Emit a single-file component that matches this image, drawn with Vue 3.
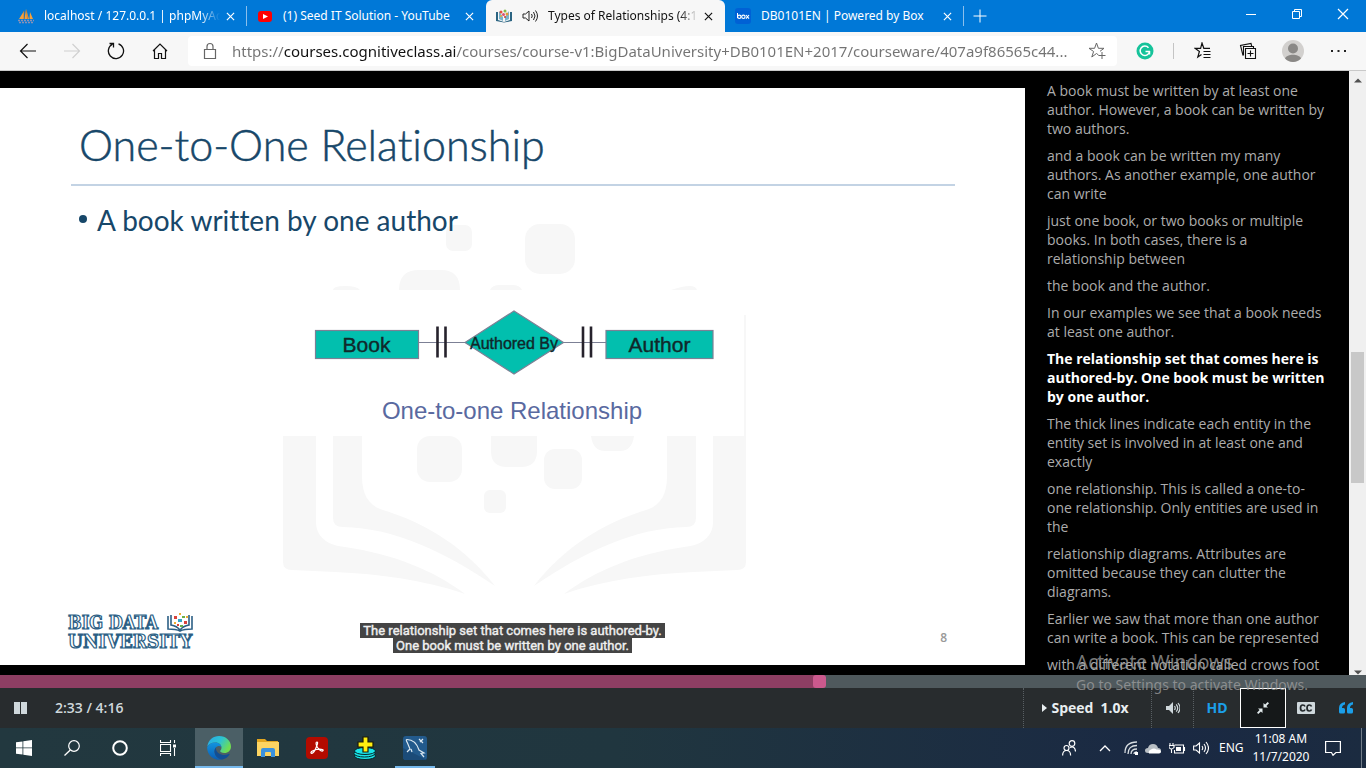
<script setup>
import { ref } from 'vue'

const tabs = [
  { title: 'localhost / 127.0.0.1 | phpMyAdmin', icon: 'pma', fade: true },
  { title: '(1) Seed IT Solution - YouTube', icon: 'yt' },
  { title: 'Types of Relationships (4:17)', icon: 'course', audio: true, active: true, fade: true },
  { title: 'DB0101EN | Powered by Box', icon: 'box' }
]

const url = ref('https://courses.cognitiveclass.ai/courses/course-v1:BigDataUniversity+DB0101EN+2017/courseware/407a9f86565c44...')
const duration = 256
const position = ref(153.9)

const transcript = [
  'A book must be written by at least one author. However, a book can be written by two authors.',
  'and a book can be written my many authors. As another example, one author can write',
  'just one book, or two books or multiple books. In both cases, there is a relationship between',
  'the book and the author.',
  'In our examples we see that a book needs at least one author.',
  'The relationship set that comes here is authored-by. One book must be written by one author.',
  'The thick lines indicate each entity in the entity set is involved in at least one and exactly',
  'one relationship. This is called a one-to-one relationship. Only entities are used in the',
  'relationship diagrams. Attributes are omitted because they can clutter the diagrams.',
  'Earlier we saw that more than one author can write a book. This can be represented',
  'with a different notation called crows foot'
]
const current = ref(5)
</script>

<template>
  <div class="screen">
    <header class="tabbar">
      <div v-for="t in tabs" :key="t.title" class="tab" :class="{ active: t.active }">
        <svg v-if="t.icon === 'pma'" class="fav" viewBox="0 0 16 16">
          <path d="M1 11 L6 3 L6 11Z M6.500 11 L8 1 L11 11Z M11.500 11 L12 4 L15 11Z" fill="#f6a13a" />
          <path d="M0 12.500h16M1 14.500h14" stroke="#8b91b5" stroke-width="1.500" stroke-dasharray="2 1" />
          <path d="M6 3v8M8.500 2l1 9" stroke="#996c3c" stroke-width=".6" />
        </svg>
        <svg v-else-if="t.icon === 'yt'" class="fav" viewBox="0 0 16 16">
          <rect x="1" y="3" width="14" height="11" rx="3" fill="#f00" />
          <path d="M6 6l5 2.500-5 2.500z" fill="#fff" />
        </svg>
        <svg v-else-if="t.icon === 'course'" class="fav" viewBox="0 0 16 16">
          <path d="M0 4h2v8l6 2 6-2V4h2v9l-8 1.500L0 13z" fill="#2b6482" />
          <path d="M3 3v8l4 2V9zM13 3v8l-4 2V9z" fill="#78b4cc" />
          <g>
            <circle cx="5" cy="4" r="1.500" fill="#e4513d" /><circle cx="9" cy="3" r="1.500" fill="#86b94d" />
            <circle cx="11" cy="6" r="1.500" fill="#e59a36" /><circle cx="7.500" cy="6.500" r="1.500" fill="#d94e74" />
            <circle cx="5" cy="8" r="1" fill="#e8a735" /><circle cx="9" cy="9" r="1" fill="#ce3f36" />
          </g>
        </svg>
        <svg v-else class="fav" viewBox="0 0 16 16">
          <rect width="16" height="16" rx="3" fill="#0061d5" />
          <path d="M2.500 5v5" stroke="#fff" />
          <g fill="none" stroke="#fff" stroke-width="1.100"><circle cx="4.300" cy="8.800" r="1.700" /><circle cx="8.400" cy="8.800" r="1.700" /><path d="M11 7l3 3.700M14 7l-3 3.700" /></g>
        </svg>
        <svg v-if="t.audio" class="audio" viewBox="0 0 16 14">
          <path d="M1 5v4h2.500L7 12V2L3.500 5zM9.500 5q1.500 2 0 4M11.500 3q3 4 0 8M13.500 1.500q4 5.500 0 11" fill="none" stroke="#222" />
        </svg>
        <span class="tab-title" :class="{ fade: t.fade }">{{ t.title }}</span>
        <button class="close" aria-label="Close tab">
          <svg viewBox="0 0 10 10"><path d="M1 1l8 8M9 1l-8 8" fill="none" stroke="currentColor" stroke-width="1.300" /></svg>
        </button>
      </div>
      <button class="newtab" aria-label="New tab">
        <svg viewBox="0 0 14 14"><path d="M7 .5v13M.5 7h13" stroke="#fff" fill="none" /></svg>
      </button>
      <div class="window-buttons">
        <button aria-label="Minimize"><svg viewBox="0 0 12 12"><path d="M1 6.500h10" stroke="#fff" /></svg></button>
        <button aria-label="Restore"><svg viewBox="0 0 12 12"><path d="M1.500 3.500h7v7h-7zM3.500 3.500v-2h7v7h-2" fill="none" stroke="#fff" /></svg></button>
        <button aria-label="Close"><svg viewBox="0 0 12 12"><path d="M1 1l10 10M11 1L1 11" stroke="#fff" stroke-width="1.200" /></svg></button>
      </div>
    </header>

    <nav class="toolbar">
      <div class="nav-buttons">
        <button aria-label="Back"><svg viewBox="0 0 18 18"><path d="M17 9H1.500M8.500 2l-7 7 7 7" fill="none" stroke="#111" stroke-width="1.200" /></svg></button>
        <button aria-label="Forward"><svg viewBox="0 0 18 18"><path d="M1 9h15.500M9.500 2l7 7-7 7" fill="none" stroke="#d0d0d0" stroke-width="1.200" /></svg></button>
        <button aria-label="Refresh"><svg viewBox="0 0 18 18"><path d="M11.500 1.800A7.600 7.600 0 1 1 5.500 2.200M2.500 1.500h4v4" fill="none" stroke="#111" stroke-width="1.300" /></svg></button>
        <button aria-label="Home"><svg viewBox="0 0 18 18"><path d="M2 9l7-7 7 7M3.500 7.500v9h4v-5h3v5h4v-9" fill="none" stroke="#111" stroke-width="1.200" /></svg></button>
      </div>
      <div class="address">
        <svg class="lock" viewBox="0 0 14 18"><path d="M1.500 7.500h11v9h-11zM4 7.500v-3a3 3 0 0 1 6 0v3" fill="none" stroke="#666" stroke-width="1.200" /></svg>
        <input v-model="url" class="url" type="text" aria-label="Address">
        <button aria-label="Add to favorites"><svg viewBox="0 0 18 18"><path d="M10.500 13L8.500 11.500 3.800 15l1.800-5.500L1 6.300h5.600L8.500 1l1.900 5.300H16l-4 3M14 10v7M10.500 13.500h7" fill="none" stroke="#666" /></svg></button>
      </div>
      <button class="grammarly" aria-label="Grammarly">
        <svg viewBox="0 0 18 18"><circle cx="9" cy="9" r="8.500" fill="#15c39a" /><path d="M12.500 5.800A4.700 4.700 0 1 0 13.500 9.500M9.500 9.500h4.500M13.500 9v3.500" fill="none" stroke="#fff" stroke-width="1.500" /></svg>
      </button>
      <span class="divider"></span>
      <div class="right-buttons">
        <button aria-label="Favorites"><svg viewBox="0 0 18 18"><path d="M7.500 12.500L3.800 15l1.600-5.500L1 6.300h5.600L8 1l1.800 5.300H16M9.500 9.500h7M9.500 12.500h7M9.500 15.500h7" fill="none" stroke="#111" stroke-width="1.200" /></svg></button>
        <button aria-label="Collections"><svg viewBox="0 0 18 18"><path d="M6.500 6.500h10v10h-10zM11.500 8.500v6M8.500 11.500h6M4 13.500L1.500 3.500 12 1.500l.8 3M4.500 13.500v-9h10v2" fill="none" stroke="#111" stroke-width="1.100" /></svg></button>
        <button class="avatar" aria-label="Profile"><svg viewBox="0 0 22 22"><circle cx="11" cy="11" r="11" fill="#d2d0ce" /><circle cx="11" cy="8.500" r="5" fill="#8a8886" /><path d="M3 18.500c2-5 14-5 16 0a11 11 0 0 1-16 0z" fill="#8a8886" /></svg></button>
        <button aria-label="Settings and more"><svg viewBox="0 0 18 18"><path d="M2 8h2v2H2zM8.500 8h2v2h-2zM15 8h2v2h-2z" fill="#222" /></svg></button>
      </div>
    </nav>

    <main class="player">
      <section class="video">
        <article class="slide">
          <svg class="art" viewBox="0 88 1025 577" preserveAspectRatio="none">
            <defs>
              <g id="page-half">
                <path d="M283 436h33v86c0 14 10 23 29 25c48 7 88 23 120 47c-40-14-85-20-130-22l-43-2q-9 0-9-8z" />
                <path d="M333 436h29v40c0 18 6 28 18 33c50 15 87 41 115 77c-50-34-100-58-152-59q-10 0-10-9z" />
              </g>
            </defs>
            <g fill="#f7f7f7">
              <use href="#page-half" />
              <use href="#page-half" transform="translate(1029 0) scale(-1 1)" />
              <rect x="744" y="315" width="2" height="122" />
              <rect x="446" y="225" width="26" height="26" rx="7" />
              <rect x="525" y="224" width="50" height="50" rx="15" />
              <path d="M399 290q0-20 20-20h22q19 0 19 20zM333 290q0-4 12-4t15 4zM490 290q2-5 10-5h12q8 0 10 5zM671 290q24-8 26 0z" />
              <rect x="417" y="436" width="45" height="46" rx="13" />
              <path d="M491 436h46v15q0 16-16 16h-14q-16 0-16-16zM591 436h43q-2 15-14 15h-15q-12 0-14-15z" />
              <rect x="544" y="449" width="38" height="40" rx="11" />
              <rect x="484" y="490" width="22" height="23" rx="6" />
            </g>
            <g stroke="#7c8095" stroke-width="1.200">
              <path d="M418 342.500h47M563 342.500h43" />
              <g fill="#02bfae">
                <rect x="315.500" y="330.500" width="103" height="28" />
                <rect x="606" y="330.500" width="107" height="28" />
                <path d="M465 342.500L514 311l49.500 31.500L514 374z" />
              </g>
            </g>
            <path d="M437.500 326.500v31M445.500 326.500v31M583 326.500v31M591 326.500v31" stroke="#26222c" stroke-width="2.600" />
            <g class="label" text-anchor="middle">
              <text x="366.500" y="352" font-size="21">Book</text>
              <text x="514" y="349" font-size="16">Authored By</text>
              <text x="659.500" y="352" font-size="21">Author</text>
              <text class="figure-title" x="512" y="419" font-size="24">One-to-one Relationship</text>
            </g>
            <g class="logo">
              <text x="68" y="629" font-size="18">BIG DATA</text>
              <text x="68" y="648" font-size="19">UNIVERSITY</text>
            </g>
            <g fill="none" stroke="#2c5f85" stroke-width="1.600">
              <path d="M168 616v13q8 0 12 2q4-2 12-2v-13M171 615v10q6 1 9 5q3-4 9-5v-10" />
            </g>
            <g>
              <path d="M174 616h3v3h-3zM184 621h3v3h-3zM177 624h2v2h-2z" fill="#d8443c" />
              <path d="M179 613h2v2h-2zM186 616h2v2h-2zM174 622h2v2h-2z" fill="#efae32" />
              <path d="M182 616h3v2h-3zM180 625h3v2h-3z" fill="#6ab04a" />
              <path d="M178 619h4v3h-4z" fill="#36a6c6" />
            </g>
          </svg>
          <h1>One-to-One Relationship</h1>
          <ul><li>A book written by one author</li></ul>
          <span class="page-number">8</span>
          <p class="caption"><span>The relationship set that comes here is authored-by.<br>One book must be written by one author.</span></p>
        </article>
      </section>
      <aside class="transcript">
        <ol>
          <li v-for="(line, i) in transcript" :key="i" :class="{ current: i === current }" @click="current = i">{{ line }}</li>
        </ol>
      </aside>
      <div class="scrollbar">
        <svg viewBox="0 0 8 5"><path d="M0 4.500L4 .5l4 4z" fill="#505050" /></svg>
        <span class="thumb"></span>
        <svg viewBox="0 0 8 5"><path d="M0 .5l4 4 4-4z" fill="#505050" /></svg>
      </div>
    </main>

    <input
      v-model="position" class="progress" type="range" min="0" :max="duration" step="0.1"
      aria-label="Video position" :style="{ '--played': position / duration * 100 + '%' }"
    >

    <div class="controls">
      <button class="pause" aria-label="Pause"><svg viewBox="0 0 14 12"><path d="M0 0h6v12H0zM7 0h6v12H7z" fill="#cfd8dc" /></svg></button>
      <span class="time">2:33 / 4:16</span>
      <button class="speed">
        <svg viewBox="0 0 5 8"><path d="M0 0l5 4-5 4z" fill="#e8eef0" /></svg>
        <span>Speed</span><span class="rate">1.0x</span>
      </button>
      <button class="volume" aria-label="Volume">
        <svg viewBox="0 0 14 12"><path d="M0 4v4h3l4 4V0L3 4z" fill="#cfd8dc" /><path d="M8.500 4q1.500 2 0 4M10.200 2.300q3 3.700 0 7.400M12 1q4 5 0 10" fill="none" stroke="#cfd8dc" stroke-width="1.200" /></svg>
      </button>
      <button class="hd">HD</button>
      <button class="shrink" aria-label="Exit full browser">
        <svg viewBox="0 0 12 12"><path d="M6.500 5.500V1l1.600 1.600L10.700 0 12 1.300 9.400 3.900 11 5.500zM5.500 6.500V11L3.900 9.400 1.300 12 0 10.700l2.600-2.600L1 6.500z" fill="#e2eaec" /></svg>
      </button>
      <button class="cc" aria-label="Captions">
        <svg viewBox="0 0 18 12"><rect width="18" height="12" rx="1" fill="#cfd8dc" /><path d="M8 4.500Q7.500 3 5.800 3Q3.500 3 3.500 6T5.800 9Q7.500 9 8 7.500M14.500 4.500Q14 3 12.300 3Q10 3 10 6t2.300 3Q14 9 14.500 7.500" fill="none" stroke="#22282b" stroke-width="1.700" /></svg>
      </button>
      <button class="quote" aria-label="Transcript">
        <svg viewBox="0 0 14 12"><path d="M6 0Q0 1 0 6v4q0 1.500 1.500 1.500h3Q6 11.500 6 10V7.500Q6 6 4.500 6H3Q3 3 6 2.500zM14 0Q8 1 8 6v4q0 1.500 1.500 1.500h3q1.500 0 1.500-1.500V7.500Q14 6 12.500 6H11q0-3 3-3.500z" fill="#1b9fe9" /></svg>
      </button>
    </div>

    <footer class="taskbar">
      <div class="apps">
        <button aria-label="Start"><svg class="i16" viewBox="0 0 16 16"><path d="M0 2.300l6.500-.9v6.100H0zM7.300 1.300L16 0v7.500H7.300zM0 8.300h6.500v6.300L0 13.700zM7.300 8.300H16V16l-8.700-1.200z" fill="#fff" /></svg></button>
        <button aria-label="Search"><svg class="i16" viewBox="0 0 16 16"><circle cx="10" cy="6" r="5.300" fill="none" stroke="#fff" stroke-width="1.200" /><path d="M6.300 10L.5 15.500" stroke="#fff" stroke-width="1.300" /></svg></button>
        <button aria-label="Cortana"><svg class="i16" viewBox="0 0 16 16"><circle cx="8" cy="8" r="6.800" fill="none" stroke="#fff" stroke-width="2" /></svg></button>
        <button aria-label="Task view"><svg class="i16" viewBox="0 0 16 16"><path d="M.5 0v2.500h10V0M.5 16v-2.500h10V16M.5 4.500h10v7H.500zM14.500 0v3M14.500 8v8" fill="none" stroke="#fff" stroke-width="1.100" /><path d="M13 4.500h3v3h-3z" fill="#fff" /></svg></button>
        <button class="focused" aria-label="Microsoft Edge">
          <svg class="i24" viewBox="0 0 24 24">
            <defs>
              <linearGradient id="edge-top" x1="0" y1="0" x2="1" y2=".5"><stop offset="0" stop-color="#28a8e8" /><stop offset=".55" stop-color="#2cc3d3" /><stop offset="1" stop-color="#6fdd52" /></linearGradient>
              <linearGradient id="edge-low" x1="0" y1="0" x2="0" y2="1"><stop offset="0" stop-color="#1294df" /><stop offset="1" stop-color="#0b5cb3" /></linearGradient>
            </defs>
            <path d="M.3 10.500C1.300 4 6.200 0 12 0c7 0 12 5 12 10.500 0 4-3 6.500-6.500 6.500-3 0-4.300-1.200-4.300-2 0-.7 1.300-1.200 1.300-3.300C14.500 9 12 6.500 8.500 6.500 4.500 6.500 1.500 8.500.3 10.500z" fill="url(#edge-top)" />
            <path d="M.2 11C1.500 8.300 4.600 6.500 8 6.500c3.500 0 6 2 6.500 4.500-1-1-2.200-1.300-3.200-1-2.500.8-3.800 3-3.800 5.500 0 4 3.200 7.500 7.500 8A12 12 0 0 1 .2 11z" fill="url(#edge-low)" />
            <path d="M9.300 11C7.500 13 7 15 7.800 17.500c1 3.500 4.200 6 7.700 6 3-.8 5.500-2.500 7-5 .2-.6-.3-.8-.8-.5-5.500 2.500-11.500 0-12.700-4.500-.2-1 0-2 .3-2.500z" fill="#124e94" />
          </svg>
        </button>
        <button aria-label="File Explorer"><svg class="i22" viewBox="0 0 22 20"><path d="M0 1h8l2 2h11v15H0z" fill="#e2a620" /><path d="M0 4h22v14H0z" fill="#fcd462" /><path d="M4 19v-7q0-2 2-2h10q2 0 2 2v7h-4v-4q0-1-1-1H9q-1 0-1 1v4z" fill="#3b92dd" /></svg></button>
        <button aria-label="Acrobat Reader"><svg class="i22" viewBox="0 0 22 22"><rect width="22" height="22" rx="4" fill="#b30b00" /><path d="M11 5c-1.500 0-1 3 .5 5.500s4.500 4.500 5.500 3.200-3.500-2-6.500-1.200-6.200 2.300-5.500 3.500 3-.5 4.500-4S12.500 5 11 5z" fill="none" stroke="#fff" stroke-width="1.200" /></svg></button>
        <button aria-label="Disk utility"><svg class="i24" viewBox="0 0 24 24"><g fill="#19e4e8" stroke="#05262b"><ellipse cx="12" cy="20" rx="10.500" ry="3.500" /><ellipse cx="11.500" cy="17.500" rx="10.500" ry="3.500" /><ellipse cx="12" cy="15" rx="10.500" ry="3.500" /></g><path d="M10 1h5v5h5v5h-5v5h-5v-5H5V6h5z" fill="#ffee11" stroke="#1c1c08" stroke-width="1.200" /></svg></button>
        <button class="running" aria-label="MySQL Workbench"><svg class="i24" viewBox="0 0 24 24"><rect width="24" height="24" rx="3" fill="#225a8c" /><path d="M0 12l24 12H3q-3 0-3-3z" fill="#1b4b78" /><path d="M4 16L7 13 4.500 7Q2.500 3.500 4 3.500C11 3.500 14 8 16 14l5 3-3 .5 3 3.500M8 13l1 3M16 3l4 4M17 6l3-3" fill="none" stroke="#dce8f0" stroke-width="1.200" /></svg></button>
      </div>
      <div class="tray">
        <svg class="people" viewBox="0 0 14 16"><g fill="none" stroke="#fff" stroke-width="1.200"><circle cx="10" cy="3.500" r="2.800" /><circle cx="4.500" cy="8" r="2.500" /><path d="M.6 15.500q0-5 4-5t4 5M8 7.500q5-2 5.500 4" /></g></svg>
        <svg class="caret" viewBox="0 0 12 8"><path d="M1 7l5-5 5 5" fill="none" stroke="#fff" stroke-width="1.300" /></svg>
        <svg class="wifi" viewBox="0 0 14 14"><path d="M1 12Q1 1 13 1M4 13Q4 4.500 13 4.500M7 13q0-5 6-5M10 13q0-2 3-2" fill="none" stroke="#d7dde1" stroke-width="1.300" /><path d="M11 11h3v3h-3z" fill="#fff" /></svg>
        <svg class="cloud" viewBox="0 0 16 11"><path d="M3 10Q0 10 0 7.500T3 5q1-4 5-4t5 4q3 0 3 2.500T13 10z" fill="#b9bfc4" /><path d="M4 10.500q-1-3 2-4 3-2 5.500 0 4-.5 4.500 2 0 2-2 2z" fill="#fff" /></svg>
        <svg class="battery" viewBox="0 0 17 12"><path d="M5.500 3h9v8h-9V8M15.500 5v4M0 3.500h5v2q-2.500 3-5 0zM1 1v2M4 1v2M2.500 7v4" fill="none" stroke="#fff" stroke-width="1.100" /><path d="M7 5h5v4H7z" fill="#fff" /></svg>
        <svg class="sound" viewBox="0 0 16 14"><path d="M.6 5v4h2.500L6.500 12V2L3.100 5zM9 5q1.500 2 0 4M11 3q3 4 0 8M13 1q5 6 0 12" fill="none" stroke="#fff" stroke-width="1.100" /></svg>
        <span class="lang">ENG</span>
        <time class="clock">11:08 AM<br>11/7/2020</time>
        <svg class="note" viewBox="0 0 16 16"><path d="M.6 1.500h14.800v11h-4.500L8 15.300 6.500 12.500H.6z" fill="none" stroke="#fff" stroke-width="1.200" /></svg>
        <span class="show-desktop"></span>
      </div>
    </footer>

    <div class="activation">
      <strong>Activate Windows</strong>
      <span>Go to Settings to activate Windows.</span>
    </div>
  </div>
</template>

<style>
html, body { margin: 0; overflow: hidden; }
</style>

<style scoped>
.screen {
  position: relative;
  display: flex;
  flex-direction: column;
  height: 100vh;
  overflow: hidden;
  font-family: "Open Sans", "Noto Sans", sans-serif;
  background: #000;
}
button {
  display: flex;
  align-items: center;
  justify-content: center;
  padding: 0;
  border: 0;
  background: none;
  color: inherit;
  font: inherit;
}
svg { display: block; flex: none; }

.tabbar { display: flex; flex: none; height: 32px; padding-left: 8px; background: #0078d7; color: #fff; }
.tab {
  display: flex;
  align-items: center;
  flex: 0 1 239px;
  min-width: 0;
  box-sizing: border-box;
  padding: 0 10px;
  font: 12px/16px "Noto Sans", sans-serif;
  border-right: 1px solid transparent;
}
.tab:first-child, .tab:nth-child(4) {
  border-image: linear-gradient(transparent 20%, #8bbfec 20%, #8bbfec 80%, transparent 80%) 1;
}
.tab.active { background: #f7f7f7; color: #111; border-radius: 6px 6px 0 0; }
.fav { width: 16px; height: 16px; margin-right: 10px; }
.audio { width: 16px; height: 14px; margin-right: 10px; }
.tab-title { flex: 1; overflow: hidden; white-space: nowrap; }
.tab-title.fade { mask-image: linear-gradient(to right, #000 88%, transparent); }
.close { width: 12px; height: 20px; margin-left: 4px; }
.close svg { width: 9px; height: 9px; }
.newtab { width: 32px; }
.newtab svg { width: 14px; height: 14px; }
.window-buttons { display: flex; margin-left: auto; padding-bottom: 4px; }
.window-buttons button { width: 46px; }
.window-buttons svg { width: 12px; height: 12px; }

.toolbar { display: flex; flex: none; align-items: center; height: 38px; background: #f7f7f7; border-bottom: 1px solid #c9c9c9; }
.nav-buttons { display: flex; padding: 0 6px; }
.nav-buttons button { width: 44px; height: 30px; }
.right-buttons button { width: 45px; height: 30px; }
.toolbar svg { width: 18px; height: 18px; }
.address { display: flex; flex: 1; align-items: center; height: 30px; padding: 0 11px 0 15px; background: #fff; border-radius: 4px; }
.toolbar .lock { width: 14px; height: 18px; margin-right: 15px; }
.url {
  flex: 1;
  min-width: 0;
  padding: 0;
  border: 0;
  outline: 0;
  font: 15px/22px "Noto Sans", sans-serif;
  color: transparent;
  background: linear-gradient(to right, #737373 52px, #111 52px, #111 225px, #737373 225px);
  background-clip: text;
}
.grammarly { width: 56px; height: 30px; }
.divider { width: 1px; height: 16px; background: #c4c4c4; }
.right-buttons { display: flex; padding: 0 6px; }
.toolbar .avatar svg { width: 22px; height: 22px; }

.player { display: flex; flex: 1; min-height: 0; background: #000; }
.video { display: flex; flex: 1; min-width: 0; padding: 17px 0 10px; }
.slide { position: relative; flex: 1; overflow: hidden; background: #fff; color: #174769; font-family: Lato, sans-serif; font-variant-ligatures: none; }
.art { position: absolute; inset: 0; width: 100%; height: 100%; }
.label { font-family: "Liberation Sans", Arial, sans-serif; fill: #10282a; stroke: #10282a; stroke-width: .4px; }
.figure-title { fill: #5969a0; stroke: none; }
.logo { font-family: "DejaVu Serif Condensed", "Liberation Serif", serif; font-weight: 700; fill: #fff; stroke: #2c5f85; stroke-width: 1.200px; }
h1 {
  position: relative;
  margin: 0 70px 0 71px;
  padding: 31px 8px 13px;
  border-bottom: 2px solid #c3d3e4;
  font-weight: 300;
  font-size: 43px;
  line-height: 52px;
  -webkit-text-stroke: 0.5px #174769;
}
ul { position: relative; margin: 0; padding: 16px 0 0 97px; font-size: 28px; line-height: 36px; list-style: none; }
li { position: relative; }
.slide li::before { content: ""; position: absolute; left: -18px; top: 13px; width: 8px; height: 8px; border-radius: 50%; background: #174769; }
.page-number { position: absolute; right: 78px; bottom: 18px; font: 600 12px/18px "Open Sans", sans-serif; color: #999; }
.caption { position: absolute; left: 0; right: 0; bottom: 12px; margin: 0; text-align: center; font: 400 13px/15px Roboto, sans-serif; color: #f0f0f0; -webkit-text-stroke: 0.4px #f0f0f0; }
.caption span { padding: 0 3px; background: #444; box-decoration-break: clone; }

.transcript { flex: 0 0 324px; box-sizing: border-box; padding: 10px 22px 0; overflow: hidden; }
.transcript ol { margin: 0; padding: 0; list-style: none; font-size: 14px; line-height: 19px; color: #acacac; }
.transcript li { margin-bottom: 8px; }
.transcript .current { color: #fff; font-weight: 700; }
.scrollbar { display: flex; flex: 0 0 17px; flex-direction: column; align-items: center; background: #f0f0f0; padding-top: 7px; box-sizing: border-box; }
.scrollbar svg { width: 8px; height: 5px; }
.thumb { width: 13px; height: 22%; margin: 269px 0 auto; background: #c8c8c8; }

.progress {
  appearance: none;
  flex: none;
  width: 100%;
  height: 13px;
  margin: 0;
  background: linear-gradient(to right, #8e3e63 var(--played), #4f595d var(--played));
}
.progress::-webkit-slider-thumb { appearance: none; width: 13px; height: 13px; border-radius: 3px; background: #cb598d; }

.controls { display: flex; flex: none; height: 40px; background: #282c2e; color: #cfd8dc; font-size: 14px; line-height: 20px; }
.controls svg { height: 12px; }
.pause { width: 41px; }
.pause svg { width: 14px; }
.time { align-self: center; margin: 0 auto 0 14px; font-weight: 600; }
.speed { width: 128px; gap: 4px; padding-right: 4px; box-sizing: border-box; border-left: 1px dotted #596064; color: #e8eef0; font-weight: 700; }
.controls .speed svg { width: 5px; height: 8px; }
.rate { margin-left: 3px; }
.volume { width: 43px; box-sizing: border-box; border-left: 1px dotted #596064; border-right: 1px dotted #596064; }
.volume svg { width: 14px; }
.hd { width: 46px; color: #1b9fe9; font-weight: 700; }
.shrink { width: 46px; box-sizing: border-box; border: 1px solid #fff; background: #151819; }
.shrink svg { width: 12px; }
.cc, .quote { width: 40px; }
.cc svg { width: 18px; }
.quote svg { width: 14px; }

.taskbar { display: flex; flex: none; justify-content: space-between; height: 40px; background: linear-gradient(to right, #22383f, #20363f 45%, #1a2943 85%, #1b2b40); color: #fff; }
.apps { display: flex; }
.apps button { width: 48px; border-bottom: 2px solid transparent; border-top: 2px solid transparent; box-sizing: border-box; }
.apps .focused { margin-left: 3px; background: #4b5f66; border-top-color: #4b5f66; border-bottom-color: #76b9ed; }
.focused + button, .focused + button + button { width: 49px; }
.apps .running { width: 40px; margin-left: 6px; border-bottom-color: #76b9ed; }
.i16 { width: 16px; height: 16px; }
.i22 { width: 22px; height: 22px; }
.i24 { width: 24px; height: 24px; }
.tray { display: flex; align-items: center; font: 12px/18px "Noto Sans", sans-serif; }
.people { width: 14px; height: 16px; margin-right: 23px; }
.caret { width: 12px; height: 8px; margin-right: 13px; }
.wifi { width: 14px; height: 14px; margin-right: 7px; }
.cloud { width: 16px; height: 11px; margin-right: 8px; }
.battery { width: 17px; height: 12px; margin-right: 7px; }
.sound { width: 16px; height: 14px; margin-right: 10px; }
.lang { width: 24px; }
.clock { width: 76px; text-align: center; }
.note { width: 16px; height: 16px; margin: 0 20px 0 6px; }
.show-desktop { width: 4px; height: 40px; border-left: 1px solid #717c88; }

.activation { position: absolute; right: 58px; bottom: 73px; color: rgba(160, 160, 160, .75); pointer-events: none; }
.activation strong, .activation span { display: block; font: 14px/20px "Noto Sans", sans-serif; }
.activation strong { font-size: 19px; line-height: 25px; }
</style>
